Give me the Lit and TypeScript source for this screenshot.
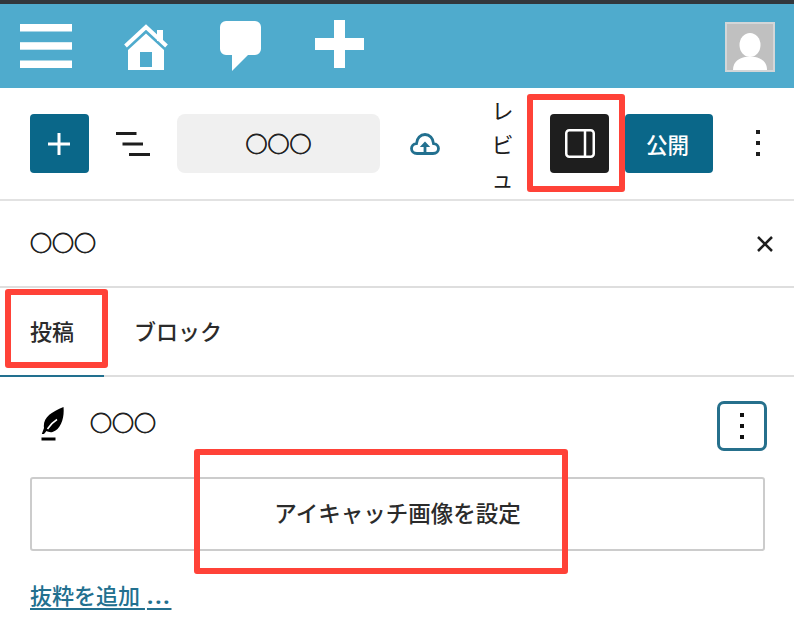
import { LitElement, html, css } from "lit";
import { customElement } from "lit/decorators.js";

const kebab = html`<svg width="4" height="27" viewBox="0 0 4 27" fill="currentColor"><rect width="4" height="4"/><rect y="11" width="4" height="4"/><rect y="22" width="4" height="4"/></svg>`;

@customElement("app-root")
export class AppRoot extends LitElement {
  static styles = css`
    :host {
      display: block;
      position: relative;
      width: 794px;
      height: 630px;
      overflow: hidden;
      background: #fff;
      color: #1e1e1e;
      font-family: "Noto Sans CJK JP", "Noto Sans", sans-serif;
    }
    * { box-sizing: border-box; }
    svg { display: block; flex: none; }
    .adminbar {
      height: 88px;
      border-top: 4px solid #32373c;
      background: #4fabcd;
      display: flex;
      align-items: flex-start;
    }
    .i-menu { margin: 20px 0 0 20px; }
    .i-home { margin: 20px 0 0 52px; }
    .i-comment { margin: 17px 0 0 52px; }
    .i-plus { margin: 16px 0 0 54px; }
    .avatar {
      margin: 18px 0 0 361px;
      width: 50px;
      height: 50px;
      border: 2px solid #d3d6d8;
      background: #c0c0c0;
    }
    .toolbar {
      height: 113px;
      border-bottom: 2px solid #e2e2e2;
      display: flex;
      align-items: center;
      padding-left: 29.5px;
    }
    .btn {
      width: 59px;
      height: 59px;
      border-radius: 4px;
      display: flex;
      align-items: center;
      justify-content: center;
      flex: none;
    }
    .add { background: #0a6789; }
    .i-list { margin-left: 27.500px; }
    .circles {
      font-size: 22px;
      line-height: 1;
      color: #222;
      -webkit-text-stroke: 0.8px #222;
    }
    .pill {
      margin-left: 27px;
      width: 203px;
      height: 59px;
      border-radius: 8px;
      background: #f0f0f0;
      display: flex;
      align-items: center;
      justify-content: center;
      padding-bottom: 3px;
    }
    .i-cloud { margin-left: 30px; }
    .preview {
      margin-left: 51.500px;
      width: 22px;
      margin-top: -2px;
      font-size: 22px;
      line-height: 34px;
      word-break: break-all;
      flex: none;
    }
    .panel { margin-left: 36.500px; background: #1e1e1e; }
    .publish {
      margin-left: 16px;
      width: 88px;
      height: 59px;
      border-radius: 4px;
      background: #0a6789;
      color: #fff;
      display: flex;
      align-items: center;
      justify-content: center;
      padding: 0 3px 1px 0;
      font-size: 21.500px;
      font-weight: 500;
      flex: none;
    }
    .kebab-top { margin-left: 43px; }
    .titlerow {
      height: 87px;
      border-bottom: 2px solid #dedede;
      display: flex;
      align-items: center;
      justify-content: space-between;
      padding: 0 20px 5px 30px;
    }
    .i-close { margin-top: 5px; }
    .tabs {
      height: 89px;
      border-bottom: 2px solid #dedede;
      display: flex;
      font-size: 22px;
      font-weight: 500;
      color: #2b2b2b;
    }
    .tab {
      display: flex;
      align-items: center;
      padding: 0 30px 4px;
      margin-bottom: -2px;
      border-bottom: 2px solid transparent;
    }
    .tab.active { width: 104px; border-bottom-color: #22708f; }
    .panelbody { padding: 24px 27px 0 30px; }
    .postrow {
      display: flex;
      align-items: center;
      height: 50px;
    }
    .i-feather { margin: 0 0 5px 10.500px; }
    .postname { margin: 0 0 10px 26.500px; flex: 1; }
    .menu {
      width: 50px;
      height: 50px;
      border: 3px solid #26708c;
      border-radius: 7px;
      display: flex;
      align-items: center;
      justify-content: center;
      color: #111;
    }
    .featured {
      margin: 26px 2px 0 0;
      height: 74px;
      border: 2px solid #ccc;
      border-radius: 3px;
      display: flex;
      align-items: center;
      justify-content: center;
      padding-bottom: 5px;
      font-size: 22.500px;
      font-weight: 500;
      color: #2b2b2b;
    }
    .excerpt {
      display: inline-block;
      margin-top: 27px;
      font-size: 22px;
      line-height: 32px;
      font-weight: 500;
      color: #22708f;
      text-decoration: underline;
      text-decoration-thickness: 2px;
      text-underline-offset: 4px;
    }
    .dots {
      font-family: "Noto Sans", sans-serif;
      font-weight: 700;
      letter-spacing: 2px;
      margin-left: 2px;
    }
    .mark {
      position: absolute;
      border: 6px solid #ff4238;
      border-radius: 3px;
      pointer-events: none;
    }
    .m1 { left: 527px; top: 94px; width: 98px; height: 98px; }
    .m2 { left: 5px; top: 289px; width: 103px; height: 79px; }
    .m3 { left: 194px; top: 449px; width: 373.500px; height: 125px; }
  `;

  render() {
    return html`
      <div class="adminbar">
        <svg class="i-menu" width="52" height="44" viewBox="0 0 52 44" fill="#fff"><rect width="52" height="7.5"/><rect y="18.2" width="52" height="7.5"/><rect y="36.5" width="52" height="7.5"/></svg>
        <svg class="i-home" width="44" height="46" viewBox="0 0 44 46" fill="#fff">
          <path d="M1.5 22 22 3l20.500 19" fill="none" stroke="#fff" stroke-width="4"/>
          <rect x="33" y="6" width="6" height="11"/>
          <path fill-rule="evenodd" d="M4 26 22 9.500 40 26V46H4ZM16 28V43H28V28Z"/>
        </svg>
        <svg class="i-comment" width="41" height="50" viewBox="0 0 41 50" fill="#fff"><path d="M6 0H35a6 6 0 0 1 6 6V28a6 6 0 0 1-6 6H28L12 50V34H6a6 6 0 0 1-6-6V6a6 6 0 0 1 6-6Z"/></svg>
        <svg class="i-plus" width="49" height="48" viewBox="0 0 49 48" fill="#fff"><rect x="19" width="11" height="48"/><rect y="18" width="49" height="12"/></svg>
        <div class="avatar">
          <svg width="46" height="46" viewBox="0 0 46 46" fill="#fff"><ellipse cx="23" cy="21" rx="10.500" ry="12"/><path d="M6 46c0-9 7-12 12-13h10c5 1 12 4 12 13Z"/></svg>
        </div>
      </div>

      <div class="toolbar">
        <div class="btn add"><svg width="22" height="22" viewBox="0 0 22 22" fill="#fff"><rect x="9.500" width="3" height="22"/><rect y="9.500" width="22" height="3"/></svg></div>
        <svg class="i-list" width="34" height="24" viewBox="0 0 34 24" fill="#1e1e1e"><rect x="0" y="0" width="20.500" height="3"/><rect x="6.500" y="10.500" width="20.500" height="3"/><rect x="13" y="21" width="21" height="3"/></svg>
        <div class="pill"><span class="circles">○○○</span></div>
        <svg class="i-cloud" width="30" height="22" viewBox="0 0 30 22" fill="none" stroke="#22708f" stroke-width="2.800">
          <path d="M7 20.500C3.500 20.500 1.500 18 1.500 15.500S3.500 10.800 6.500 10.500C6.800 5 10.500 1.500 15 1.500S23.200 5 23.500 10.500C26.500 10.800 28.500 13 28.500 15.500S26.500 20.500 23 20.500Z"/>
          <path d="M15 20.500V11" />
          <path d="M15 8.500 9.800 14H20.200Z" fill="#22708f" stroke="none"/>
        </svg>
        <div class="preview">レビュ</div>
        <div class="btn panel"><svg width="30" height="29" viewBox="0 0 30 29" fill="none" stroke="#fff" stroke-width="2.500"><rect x="1.250" y="1.250" width="27.500" height="26.500" rx="3"/><path d="M20 1.250V27.750"/></svg></div>
        <div class="publish">公開</div>
        <div class="kebab-top">${kebab}</div>
      </div>

      <div class="titlerow">
        <span class="circles">○○○</span>
        <svg class="i-close" width="18" height="18" viewBox="0 0 18 18" stroke="#1e1e1e" stroke-width="2.500"><path d="M2 2 16 16M16 2 2 16"/></svg>
      </div>

      <div class="tabs">
        <div class="tab active">投稿</div>
        <div class="tab">ブロック</div>
      </div>

      <div class="panelbody">
        <div class="postrow">
          <svg class="i-feather" width="23" height="34" viewBox="0 0 23 34">
            <path fill="#000" d="M22.500 0C23.500 10 20.500 22 11.500 25 9.500 25.500 7 25 5.500 24L3 27H.8L3 21C1.500 11 10 5 22.500 0Z"/>
            <path d="M6.500 22C9 18 12 15 16 12.500" fill="none" stroke="#fff" stroke-width="1.500"/>
            <rect x="0.500" y="30.500" width="14" height="3"/>
          </svg>
          <span class="postname circles">○○○</span>
          <div class="menu">${kebab}</div>
        </div>
        <div class="featured">アイキャッチ画像を設定</div>
        <a class="excerpt">抜粋を追加 <span class="dots">...</span></a>
      </div>

      <div class="mark m1"></div>
      <div class="mark m2"></div>
      <div class="mark m3"></div>
    `;
  }
}
